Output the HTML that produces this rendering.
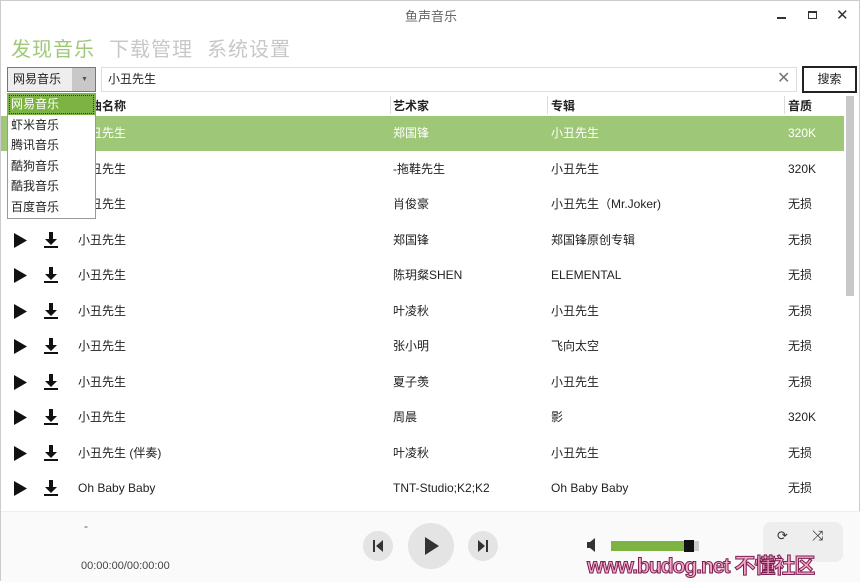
<!DOCTYPE html>
<html><head><meta charset="utf-8"><style>
*{margin:0;padding:0;box-sizing:border-box}
body{width:860px;height:581px;background:#fff;font-family:"Liberation Sans","Noto Sans CJK SC",sans-serif;font-size:12px;color:#222;position:relative;overflow:hidden;border:1px solid #ccc}
.a{position:absolute}
.title{top:5px;left:0;width:860px;text-align:center;color:#666;font-size:13px}
.tabs{top:32px;left:10px;font-size:20px;color:#c8c8c8;letter-spacing:1px}
.tabs span{margin-right:14px}
.row{position:absolute;left:0;width:843px;height:35px;font-size:12px}
.row div{position:absolute;top:0;line-height:35px}
.sel{background:#9ec877;color:#fff}
.dd div{height:20.5px;line-height:20px;padding-left:3px;font-size:12px}
</style></head><body>
<div class="a title">鱼声音乐</div>
<div class="a" style="left:776px;width:9px;height:2px;background:#333;top:16px"></div>
<div class="a" style="top:10px;left:807px;width:9px;height:8px;border:1px solid #333;border-top-width:2px"></div>
<div class="a" style="top:5px;left:835px;font-size:15px;color:#333">✕</div>
<div class="a tabs"><span style="color:#9ec877">发现音乐</span><span>下载管理</span><span>系统设置</span></div>

<div class="a" style="top:66px;left:6px;width:89px;height:25px;border:1px solid #777;background:#eee"></div>
<div class="a" style="top:66px;left:71px;width:24px;height:25px;background:#c8c8c8;border:1px solid #777;border-left:none"></div>
<div class="a" style="top:66px;left:12px;line-height:25px">网易音乐</div>
<div class="a" style="top:75px;left:80px;font-size:7px;color:#555">▼</div>
<div class="a" style="top:66px;left:100px;width:696px;height:25px;border:1px solid #ddd"></div>
<div class="a" style="top:66px;left:107px;line-height:25px">小丑先生</div>
<div class="a" style="top:67px;left:776px;font-size:16px;color:#777">✕</div>
<div class="a" style="top:65px;left:801px;width:55px;height:27px;border:2px solid #222;text-align:center;line-height:23px">搜索</div>

<div class="a" style="top:93px;left:0;width:843px;height:22px;font-weight:bold">
<div class="a" style="left:77px;top:3px">歌曲名称</div>
<div class="a" style="left:389px;top:2px;width:1px;height:18px;background:#ddd"></div><div class="a" style="left:392px;top:3px">艺术家</div>
<div class="a" style="left:546px;top:2px;width:1px;height:18px;background:#ddd"></div><div class="a" style="left:550px;top:3px">专辑</div>
<div class="a" style="left:783px;top:2px;width:1px;height:18px;background:#ddd"></div><div class="a" style="left:787px;top:3px">音质</div>
</div>
<div class="a" style="left:845px;top:95px;width:8px;height:200px;background:#c8c8c8"></div>

<div id="rows"></div>
<script>
var d=[["小丑先生","郑国锋","小丑先生","320K"],["小丑先生","-拖鞋先生","小丑先生","320K"],["小丑先生","肖俊豪","小丑先生（Mr.Joker)","无损"],["小丑先生","郑国锋","郑国锋原创专辑","无损"],["小丑先生","陈玥粲SHEN","ELEMENTAL","无损"],["小丑先生","叶凌秋","小丑先生","无损"],["小丑先生","张小明","飞向太空","无损"],["小丑先生","夏子羡","小丑先生","无损"],["小丑先生","周晨","影","320K"],["小丑先生 (伴奏)","叶凌秋","小丑先生","无损"],["Oh Baby Baby","TNT-Studio;K2;K2","Oh Baby Baby","无损"]];
var h="";d.forEach(function(r,i){var t=115+i*35.5;
h+='<div class="row'+(i==0?' sel':'')+'" style="top:'+t+'px">'+
'<svg style="position:absolute;left:11px;top:9px" width="16" height="17"><path d="M2 1L15 8.5L2 16Z" fill="#111"/></svg>'+
'<svg style="position:absolute;left:42px;top:8px" width="16" height="18"><path d="M6 1H10V8H14L8 14L2 8H6Z" fill="#111"/><rect x="1" y="15" width="14" height="2" fill="#111"/></svg>'+
'<div style="left:77px">'+r[0]+'</div><div style="left:392px">'+r[1]+'</div><div style="left:550px">'+r[2]+'</div><div style="left:787px">'+r[3]+'</div></div>';});
document.getElementById("rows").innerHTML=h;
</script>

<div class="a dd" style="top:92px;left:6px;width:89px;height:126px;background:#fff;border:1px solid #999">
<div style="background:#7cb342;color:#fff;outline:1px dotted #333;outline-offset:-2px">网易音乐</div><div>虾米音乐</div><div>腾讯音乐</div><div>酷狗音乐</div><div>酷我音乐</div><div>百度音乐</div></div>

<div class="a" style="top:510px;left:0;width:860px;height:71px;background:#fafafa;border-top:1px solid #eee"></div>
<div class="a" style="top:518px;left:83px;color:#555">-</div>
<div class="a" style="top:559px;left:80px;font-size:11px;color:#444">00:00:00/00:00:00</div>
<div class="a" style="top:530px;left:362px;width:30px;height:30px;border-radius:50%;background:#e4e4e4"></div>
<div class="a" style="top:522px;left:407px;width:46px;height:46px;border-radius:50%;background:#e4e4e4"></div>
<div class="a" style="top:530px;left:467px;width:30px;height:30px;border-radius:50%;background:#e4e4e4"></div>
<svg class="a" style="top:538px;left:370px" width="14" height="14"><rect x="2" y="1" width="2" height="12" fill="#333"/><path d="M12 1V13L5 7Z" fill="#333"/></svg>
<svg class="a" style="top:535px;left:421px" width="20" height="20"><path d="M3 1L17 10L3 19Z" fill="#333"/></svg>
<svg class="a" style="top:538px;left:475px" width="14" height="14"><rect x="10" y="1" width="2" height="12" fill="#333"/><path d="M2 1V13L9 7Z" fill="#333"/></svg>
<svg class="a" style="top:537px;left:585px" width="14" height="14"><path d="M1 4H4L9 0V14L4 10H1Z" fill="#333"/></svg>
<div class="a" style="top:540px;left:610px;width:73px;height:10px;background:#7cb342"></div>
<div class="a" style="top:539px;left:683px;width:10px;height:12px;background:#111"></div>
<div class="a" style="top:540px;left:693px;width:5px;height:10px;background:#ccc"></div>
<div class="a" style="top:521px;left:762px;width:80px;height:40px;border-radius:8px;background:#eee"></div>
<div class="a" style="top:527px;left:776px;font-size:13px;color:#333">⟳</div>
<div class="a" style="top:526px;left:811px;font-size:14px;color:#333">⤨</div>
<div class="a" style="top:549px;left:586px;font-size:21px;font-weight:bold;color:#f6a6c8;letter-spacing:-1px;-webkit-text-stroke:1px #7a2050;font-family:'Liberation Sans Narrow','Liberation Sans','Noto Sans CJK SC',sans-serif">www.budog.net 不懂社区</div>
</body></html>
